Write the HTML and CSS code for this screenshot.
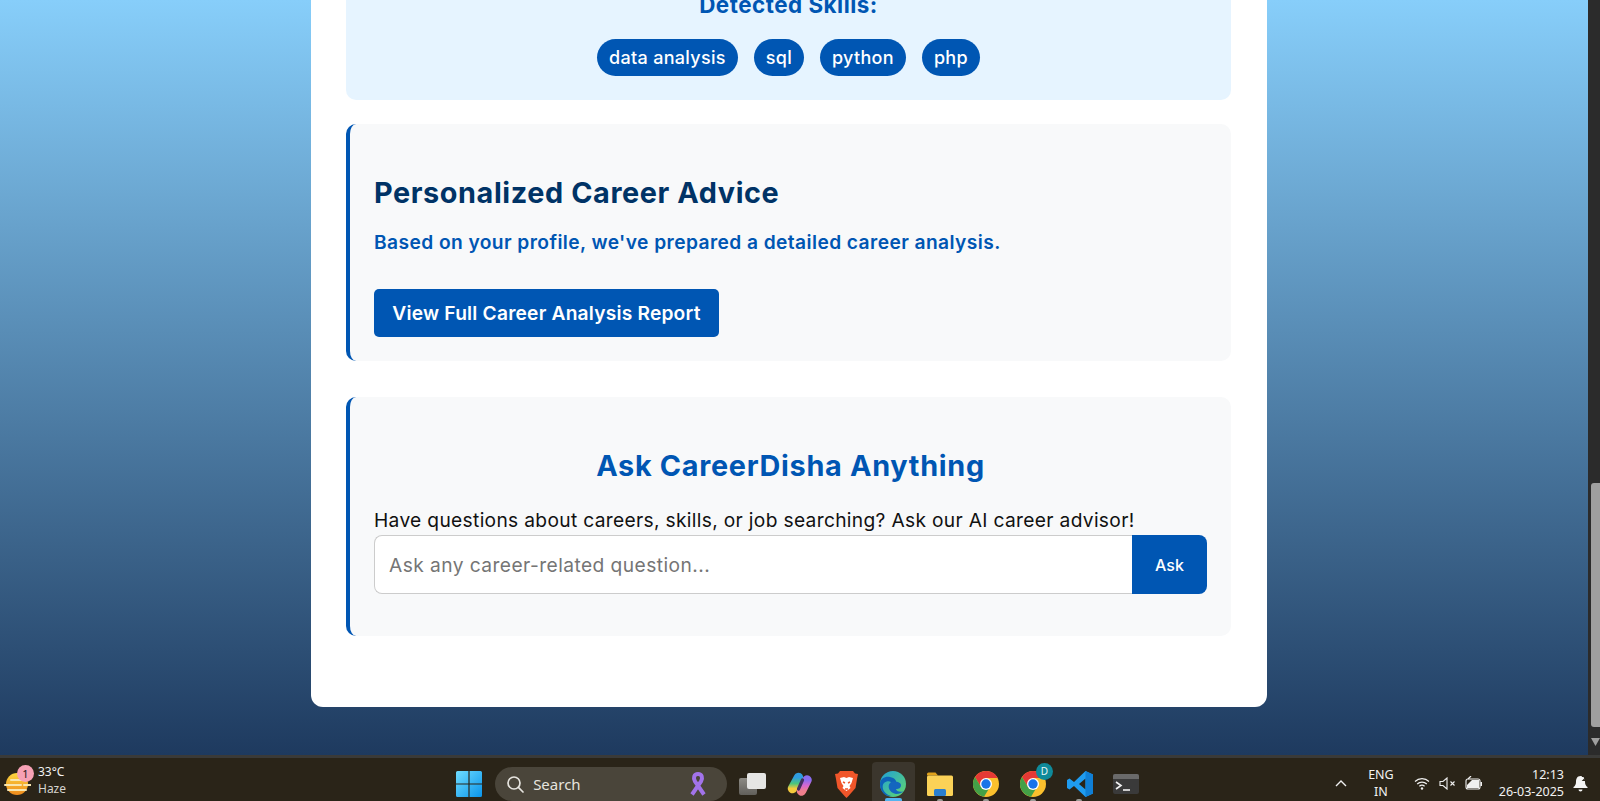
FILE: index.html
```html
<!DOCTYPE html>
<html lang="en">
<head>
<meta charset="utf-8">
<title>CareerDisha</title>
<link rel="stylesheet" href="styles.css">
</head>
<body>
<div class="screen">
  <div class="viewport">
    <main class="page">
      <div class="card">
        <section class="skills">
          <h3 class="skills-title">Detected Skills:</h3>
          <div class="pills">
            <span class="pill">data analysis</span>
            <span class="pill">sql</span>
            <span class="pill">python</span>
            <span class="pill">php</span>
          </div>
        </section>
        <section class="panel advice">
          <h2 class="advice-title">Personalized Career Advice</h2>
          <p class="advice-sub">Based on your profile, we've prepared a detailed career analysis.</p>
          <a class="report-btn" href="#">View Full Career Analysis Report</a>
        </section>
        <section class="panel ask">
          <h2 class="ask-title">Ask CareerDisha Anything</h2>
          <p class="ask-text">Have questions about careers, skills, or job searching? Ask our AI career advisor!</p>
          <form class="ask-form">
            <input class="ask-input" type="text" placeholder="Ask any career-related question...">
            <button class="ask-btn" type="button">Ask</button>
          </form>
        </section>
      </div>
    </main>
    <aside class="scrollbar">
      <div class="thumb"></div>
      <svg class="arrow" width="9" height="8" viewBox="0 0 9 8"><path d="M0 0h9L4.500 8z" fill="#9f9f9f"/></svg>
    </aside>
  </div>
  <footer class="taskbar">
    <div class="weather">
      <div class="weather-icon">
        <svg width="28" height="28" viewBox="0 0 28 28">
          <defs><linearGradient id="sun" x1="0" y1="0" x2="0" y2="1"><stop offset="0" stop-color="#fcd53f"/><stop offset="1" stop-color="#ee8a1c"/></linearGradient></defs>
          <circle cx="14" cy="14" r="11" fill="url(#sun)"/>
          <path d="M8 10h15M2 15h16M21 15h7M5 20h18" stroke="#f8e6b0" stroke-width="2" stroke-linecap="round"/>
        </svg>
        <span class="badge">1</span>
      </div>
      <div class="weather-text"><span class="temp">33°C</span><span class="cond">Haze</span></div>
    </div>
    <nav class="apps">
      <div class="app">
        <svg width="26" height="26" viewBox="0 0 26 26">
          <defs><linearGradient id="win" x1="0" y1="0" x2="1" y2="1"><stop offset="0" stop-color="#6fdcff"/><stop offset="1" stop-color="#0a94ea"/></linearGradient></defs>
          <path d="M0 1.500A1.500 1.500 0 0 1 1.500 0H12.400V12.400H0zM13.600 0H24.500A1.500 1.500 0 0 1 26 1.500V12.400H13.600zM0 13.600H12.400V26H1.500A1.500 1.500 0 0 1 0 24.500zM13.600 13.600H26V24.500A1.500 1.500 0 0 1 24.500 26H13.600z" fill="url(#win)"/>
        </svg>
      </div>
      <div class="search">
        <svg width="18" height="18" viewBox="0 0 18 18"><circle cx="8" cy="8" r="6" fill="none" stroke="#e6e4df" stroke-width="1.700"/><path d="M12.400 12.400L17 17" stroke="#e6e4df" stroke-width="1.700" stroke-linecap="round"/></svg>
        <span class="search-label">Search</span>
        <svg class="ribbon" width="18" height="26" viewBox="0 0 18 26">
          <path d="M3 23.500L12 10.500C14 7 13 3 9 3S4 7 6 10.500L15 23.500" fill="none" stroke="#a273ea" stroke-width="4"/>
        </svg>
      </div>
      <div class="app">
        <svg width="28" height="24" viewBox="0 0 28 24">
          <defs><linearGradient id="tv" x1="0" y1="0" x2="0" y2="1"><stop offset="0" stop-color="#8d8b85"/><stop offset="1" stop-color="#615f5a"/></linearGradient></defs>
          <rect x="0" y="6" width="18" height="17" rx="2" fill="url(#tv)"/>
          <rect x="8" y="1" width="19" height="16" rx="2" fill="#e6e6e4"/>
        </svg>
      </div>
      <div class="app">
        <svg width="26" height="24" viewBox="0 0 26 24">
          <defs>
            <linearGradient id="copL" x1="0" y1="0" x2="0" y2="1"><stop offset="0" stop-color="#2f9de0"/><stop offset=".55" stop-color="#4cc47c"/><stop offset="1" stop-color="#f5c93c"/></linearGradient>
            <linearGradient id="copR" x1="0" y1="0" x2="0" y2="1"><stop offset="0" stop-color="#8a6cf0"/><stop offset=".5" stop-color="#d667d0"/><stop offset="1" stop-color="#f07f8c"/></linearGradient>
          </defs>
          <path d="M11.500 5.500L5.500 16.500" stroke="url(#copL)" stroke-width="9.500" stroke-linecap="round" fill="none"/>
          <path d="M20 8L14.500 19" stroke="url(#copR)" stroke-width="9.500" stroke-linecap="round" fill="none"/>
          <path d="M15.500 8L11.500 17" stroke="#43305f" stroke-width="3.200" stroke-linecap="round"/>
        </svg>
      </div>
      <div class="app">
        <svg width="23" height="27" viewBox="0 0 23 27">
          <path d="M5 0h13l2 2.500 3 .5-1 5-1.500 9-7 8-2 2-2-2-7-8L1 8 0 3l3-.5z" fill="#f0562a"/>
          <path d="M5 7l4-1 2.500 1L14 6l4 1-1.500 5-2 3 1 2-4 3-4-3 1-2-2-3z" fill="#fff"/>
          <path d="M8 11l2 1M15 11l-2 1M10 18h3" stroke="#f0562a" stroke-width="1.500"/>
        </svg>
      </div>
      <div class="app active">
        <svg width="26" height="26" viewBox="0 0 26 26">
          <defs><linearGradient id="edge" x1="0" y1="0" x2="1" y2="1"><stop offset="0" stop-color="#1fa0d8"/><stop offset="1" stop-color="#62d86c"/></linearGradient></defs>
          <circle cx="13" cy="13" r="13" fill="url(#edge)"/>
          <path d="M0 13C0 7 6 5 10 6c5 1 7 4 6 7-1 2-4 2-4 0 0-3-5-4-8-1-3 3-1 11 7 13C5 26 0 20 0 13z" fill="#0e63b8"/>
          <path d="M10 12c-3 3-1 10 6 11 3 0 6-1 8-3-4 2-8 0-8-2 3 0 5-1 5-4 0-3-8-5-11-2z" fill="#1466bf"/>
        </svg>
        <span class="active-bar"></span>
      </div>
      <div class="app">
        <svg width="26" height="24" viewBox="0 0 26 24">
          <path d="M0 2a1.500 1.500 0 0 1 1.500-1.500h7L11 3.500H0z" fill="#e0a21c"/>
          <rect x="0" y="3.500" width="26" height="20.500" rx="1.500" fill="#fbd257"/>
          <rect x="7" y="17" width="12" height="7" rx="1.500" fill="#2a7fcf"/>
        </svg>
        <span class="dot"></span>
      </div>
      <div class="app">
        <svg width="26" height="26" viewBox="0 0 26 26">
          <circle cx="13" cy="13" r="13" fill="#fbc02d"/>
          <path d="M13 0a13 13 0 0 0-11 6l6 10 5-9h11.700A13 13 0 0 0 13 0z" fill="#e53935"/>
          <path d="M2 6a13 13 0 0 0 9 19.800L17 16l-9 0z" fill="#43a047"/>
          <circle cx="13" cy="13" r="6" fill="#fff"/>
          <circle cx="13" cy="13" r="4.700" fill="#1a73e8"/>
        </svg>
        <span class="dot"></span>
      </div>
      <div class="app">
        <div class="profile-icon">
          <svg width="26" height="26" viewBox="0 0 26 26">
            <circle cx="13" cy="13" r="13" fill="#fbc02d"/>
            <path d="M13 0a13 13 0 0 0-11 6l6 10 5-9h11.700A13 13 0 0 0 13 0z" fill="#e53935"/>
            <path d="M2 6a13 13 0 0 0 9 19.800L17 16l-9 0z" fill="#43a047"/>
            <circle cx="13" cy="13" r="6" fill="#fff"/>
            <circle cx="13" cy="13" r="4.700" fill="#1a73e8"/>
          </svg>
          <span class="profile">D</span>
        </div>
        <span class="dot"></span>
      </div>
      <div class="app">
        <svg width="26" height="26" viewBox="0 0 26 26">
          <path d="M18.500 0L26 3.500v19L18.500 26 7 15l-4.500 3.500L0 17V9l2.500-1.500L7 11zM18.500 7.500L12 13l6.500 5.500z" fill="#1f9cf0"/>
          <path d="M18.500 0L26 3.500v19L18.500 26z" fill="#0f7fd6"/>
        </svg>
        <span class="dot"></span>
      </div>
      <div class="app">
        <svg width="26" height="20" viewBox="0 0 26 20">
          <rect width="26" height="20" rx="2" fill="#3a3a3a"/>
          <path d="M2 0h22a2 2 0 0 1 2 2v3H0V2a2 2 0 0 1 2-2z" fill="#6a6a6a"/>
          <path d="M3 8l5 3.500L3 15" fill="none" stroke="#f2f2f2" stroke-width="1.600"/>
          <path d="M10 16h7" stroke="#f2f2f2" stroke-width="1.600"/>
        </svg>
      </div>
    </nav>
    <div class="tray">
      <svg class="chevron" width="12" height="7" viewBox="0 0 12 7"><path d="M1 6l5-5 5 5" fill="none" stroke="#f0f0f0" stroke-width="1.400"/></svg>
      <div class="lang"><span>ENG</span><span>IN</span></div>
      <div class="status">
        <svg width="16" height="13" viewBox="0 0 16 13"><path d="M1 4.500a10 10 0 0 1 14 0M3.200 7a7 7 0 0 1 9.600 0M5.400 9.300a3.800 3.800 0 0 1 5.200 0" fill="none" stroke="#f0f0f0" stroke-width="1.200"/><circle cx="8" cy="11.500" r="1.200" fill="#f0f0f0"/></svg>
        <svg width="17" height="13" viewBox="0 0 17 13"><path d="M1 4.500h3L8 1v11L4 8.500H1z" fill="none" stroke="#f0f0f0" stroke-width="1.100"/><path d="M11.500 4.500l4 4M15.500 4.500l-4 4" stroke="#f0f0f0" stroke-width="1.100"/></svg>
        <svg width="18" height="14" viewBox="0 0 18 14"><rect x="1" y="3" width="14" height="10" rx="2" fill="none" stroke="#f0f0f0" stroke-width="1.100"/><path d="M2 9l5-5h7v8H2z" fill="#f0f0f0"/><rect x="15.500" y="6" width="1.500" height="4" fill="#f0f0f0"/><path d="M3 3l3-3" stroke="#f0f0f0" stroke-width="1.200"/></svg>
      </div>
      <div class="clock"><span>12:13</span><span>26-03-2025</span></div>
      <svg class="bell" width="15" height="17" viewBox="0 0 15 17"><path d="M7.500 1C4 1 3 4 3 7c0 2.500-1 4-2.500 5v1h14v-1C13 11 12 9.500 12 7c0-3-1-6-4.500-6z" fill="#f5f5f5"/><path d="M5.500 14.500h4a2 2 0 0 1-4 0z" fill="#f5f5f5"/><path d="M9 1.500h5L10 5.500h4" fill="none" stroke="#2a2418" stroke-width="1.100"/></svg>
    </div>
  </footer>
</div>
</body>
</html>
```

FILE: styles.css
```css
* { box-sizing: border-box; }

html, body {
  margin: 0;
  height: 100%;
  overflow: hidden;
}

body {
  font-family: Inter, "Liberation Sans", sans-serif;
}

.screen {
  height: 801px;
  display: flex;
  flex-direction: column;
}

.viewport {
  height: 755px;
  display: flex;
  overflow: hidden;
}

.page {
  flex: 1;
  display: flex;
  flex-direction: column;
  justify-content: flex-end;
  align-items: center;
  padding: 0 10px 48px 0;
  background: linear-gradient(180deg, #87cefa 0%, #1e3a5f 100%);
  overflow: hidden;
}

.card {
  flex: none;
  width: 956px;
  background: #fff;
  border-radius: 12px;
  padding: 40px 36px 71px 35px;
}

.skills {
  background: #e6f4ff;
  border-radius: 10px;
  padding: 40px 24px 24px;
  margin-bottom: 24px;
  text-align: center;
}

.skills-title {
  margin: 0 0 24px;
  height: 15px;
  line-height: 9px;
  font-size: 22.4px;
  letter-spacing: .5px;
  font-weight: 700;
  color: #0056b3;
}

.pills {
  display: flex;
  justify-content: center;
  gap: 16px;
}

.pill {
  height: 37px;
  line-height: 37px;
  padding: 0 12px;
  border-radius: 19px;
  background: #0056b3;
  color: #fff;
  font-size: 18px;
  letter-spacing: .3px;
  font-weight: 500;
}

.panel {
  background: #f8f9fa;
  border-left: 4px solid #0056b3;
  border-radius: 10px;
  padding: 24px;
}

.advice {
  height: 237px;
  margin-bottom: 36px;
}

.advice-title {
  margin: 24px 0 0;
  font-size: 28.8px;
  letter-spacing: .6px;
  line-height: 42px;
  font-weight: 700;
  color: #003366;
}

.advice-sub {
  margin: 14px 0 0;
  font-size: 19.2px;
  letter-spacing: .42px;
  line-height: 28px;
  font-weight: 600;
  color: #0056b3;
}

.report-btn {
  display: inline-block;
  margin-top: 33px;
  width: 345px;
  height: 48px;
  line-height: 48px;
  text-align: center;
  background: #0056b3;
  color: #fff;
  border-radius: 5px;
  font-size: 19.2px;
  letter-spacing: .2px;
  font-weight: 600;
  text-decoration: none;
}

.ask {
  height: 239px;
}

.ask-title {
  margin: 24px 0 0;
  text-align: center;
  font-size: 28.8px;
  letter-spacing: .7px;
  line-height: 42px;
  font-weight: 700;
  color: #0056b3;
}

.ask-text {
  margin: 18px 0 0;
  font-size: 19.2px;
  letter-spacing: .32px;
  line-height: 30px;
  color: #111;
}

.ask-form {
  display: flex;
}

.ask-input {
  flex: 1;
  height: 59px;
  padding: 0 14px;
  border: 1px solid #ccc;
  border-right: 0;
  border-radius: 8px 0 0 8px;
  background: #fff;
  font-family: inherit;
  font-size: 19.2px;
  letter-spacing: .43px;
  outline: 0;
}

.ask-input::placeholder {
  color: #757575;
}

.ask-btn {
  width: 75px;
  height: 59px;
  border: 0;
  border-radius: 0 8px 8px 0;
  background: #0056b3;
  color: #fff;
  font-family: inherit;
  font-size: 16px;
  font-weight: 500;
}

.scrollbar {
  flex: none;
  width: 12px;
  background: #2b2b2b;
  display: flex;
  flex-direction: column;
  align-items: flex-end;
  padding-top: 483px;
}

.thumb {
  width: 9px;
  height: 244px;
  background: #9f9f9f;
  border-radius: 3px 0 0 3px;
}

.arrow {
  margin-top: 11px;
}

.taskbar {
  height: 46px;
  display: grid;
  grid-template-columns: 1fr auto 1fr;
  background: #2a2418;
  border-top: 3px solid #3a3a38;
  color: #f2f2f2;
  font-family: "Noto Sans", "Liberation Sans", sans-serif;
}

.weather {
  display: flex;
  align-items: center;
  gap: 7px;
  padding-left: 3px;
}

.weather-icon {
  position: relative;
  width: 28px;
  height: 28px;
  margin-top: 8px;
}

.badge {
  position: absolute;
  top: -5px;
  right: -3px;
  width: 17px;
  height: 17px;
  border-radius: 50%;
  background: #f7a1b5;
  color: #2a1a1a;
  font-size: 11px;
  line-height: 17px;
  text-align: center;
}

.weather-text {
  display: flex;
  flex-direction: column;
  font-size: 12px;
  line-height: 17px;
}

.cond {
  color: #d6d4cf;
}

.apps {
  display: flex;
  align-items: center;
  margin-left: -5px;
}

.app {
  position: relative;
  width: 46.6px;
  height: 43px;
  display: flex;
  align-items: center;
  justify-content: center;
  padding-top: 9px;
}

.active::before {
  content: "";
  position: absolute;
  left: 2px;
  right: 2px;
  top: 4px;
  bottom: 0;
  background: #3b362d;
  border-radius: 4px 4px 0 0;
  z-index: 0;
}

.app svg {
  position: relative;
  z-index: 1;
}

.active-bar {
  position: absolute;
  bottom: 0;
  left: 15px;
  width: 17px;
  height: 3px;
  background: #55b4f0;
  border-radius: 2px 2px 0 0;
  z-index: 1;
}

.dot {
  position: absolute;
  bottom: 0;
  left: 20px;
  width: 6px;
  height: 2px;
  background: #9a9a96;
  border-radius: 2px 2px 0 0;
}

.search {
  width: 232px;
  height: 34px;
  margin: 8px 3px 0 3px;
  display: flex;
  align-items: center;
  padding: 0 20px 0 11px;
  border-radius: 17px;
  background: #4a453a;
  color: #e6e4df;
  font-size: 15px;
}

.search-label {
  margin-left: 9px;
  flex: 1;
}

.profile-icon {
  position: relative;
  width: 26px;
  height: 26px;
}

.profile {
  position: absolute;
  top: -8px;
  right: -7px;
  width: 17px;
  height: 17px;
  border-radius: 50%;
  background: #0f8a9a;
  color: #e8f6f8;
  font-size: 10px;
  line-height: 17px;
  text-align: center;
  z-index: 2;
}

.tray {
  display: flex;
  align-items: center;
  justify-content: flex-end;
  padding-top: 7px;
  padding-right: 12px;
  font-size: 12.5px;
}

.chevron {
  margin-right: 21px;
}

.lang {
  display: flex;
  flex-direction: column;
  align-items: center;
  line-height: 17px;
  margin-right: 20px;
}

.status {
  display: flex;
  align-items: center;
  gap: 9px;
  margin-right: 16px;
}

.clock {
  display: flex;
  flex-direction: column;
  align-items: flex-end;
  line-height: 17px;
  margin-right: 9px;
}
```
